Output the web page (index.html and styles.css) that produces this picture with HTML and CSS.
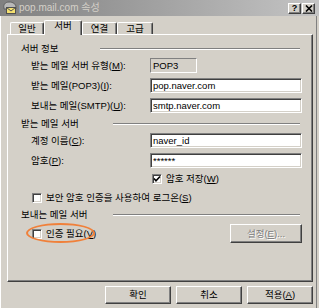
FILE: index.html
```html
<!DOCTYPE html>
<html lang="ko">
<head>
    <meta charset="UTF-8">
    <title>pop.mail.com 속성</title>
    <link rel="stylesheet" href="styles.css">
</head>
<body>
    <div class="titlebar">
        <svg class="title-icon" viewBox="0 0 14 14" width="14" height="14">
            <path d="M1 7 C0 4 2 1 6 1 C10 1 13 3 13 6 L13 8 L1 8 Z" fill="#b8b8b8" stroke="#606060" stroke-width="1"/>
            <rect x="3.5" y="6.5" width="9" height="6" fill="#f4e070" stroke="#505050" stroke-width="1"/>
            <path d="M3.5 6.5 L8 10 L12.5 6.5" fill="none" stroke="#505050" stroke-width="1"/>
        </svg>
        <span class="title-text">pop.mail.com 속성</span>
        <div class="title-buttons">
            <span class="title-btn">?</span>
            <span class="title-btn">
                <svg viewBox="0 0 8 7" width="8" height="7">
                    <path d="M1 0.5 L7 6.5 M7 0.5 L1 6.5" stroke="#000" stroke-width="1.6"/>
                </svg>
            </span>
        </div>
    </div>

    <div class="content">
        <div class="tabs">
            <div class="tab tab-general">일반</div>
            <div class="tab tab-server active">서버</div>
            <div class="tab tab-conn">연결</div>
            <div class="tab tab-adv">고급</div>
        </div>

        <div class="panel">
            <div class="heading">
                <span class="heading-text short">서버 정보</span>
                <span class="etched"></span>
            </div>
            <div class="row first">
                <label>받는 메일 서버 유형(<u>M</u>):</label>
                <div class="static">POP3</div>
            </div>
            <div class="row">
                <label>받는 메일(POP3)(<u>I</u>):</label>
                <input type="text" class="field" value="pop.naver.com">
            </div>
            <div class="row">
                <label>보내는 메일(SMTP)(<u>U</u>):</label>
                <input type="text" class="field" value="smtp.naver.com">
            </div>

            <div class="heading">
                <span class="heading-text">받는 메일 서버</span>
                <span class="etched"></span>
            </div>
            <div class="row first">
                <label>계정 이름(<u>C</u>):</label>
                <input type="text" class="field" value="naver_id">
            </div>
            <div class="row">
                <label>암호(<u>P</u>):</label>
                <input type="text" class="field" value="******">
            </div>
            <div class="row check-line">
                <span></span>
                <div class="check indent">
                    <span class="box">
                        <svg viewBox="0 0 8 8" width="8" height="8">
                            <path d="M1 3.5 L3 5.8 L7 1.5" fill="none" stroke="#000" stroke-width="1.6"/>
                        </svg>
                    </span>
                    <span>암호 저장(<u>W</u>)</span>
                </div>
            </div>
            <div class="check-row">
                <div class="check">
                    <span class="box"></span>
                    <span>보안 암호 인증을 사용하여 로그온(<u>S</u>)</span>
                </div>
            </div>

            <div class="heading">
                <span class="heading-text">보내는 메일 서버</span>
                <span class="etched"></span>
            </div>
            <div class="auth-row">
                <div class="check">
                    <span class="box"></span>
                    <span>인증 필요(<u>V</u>)</span>
                </div>
                <button class="btn settings" disabled>설정(<u>E</u>)...</button>
                <span class="highlight"></span>
            </div>
        </div>

        <div class="actions">
            <button class="btn">확인</button>
            <button class="btn">취소</button>
            <button class="btn">적용(<u>A</u>)</button>
        </div>
    </div>
</body>
</html>
```

FILE: styles.css
```css
* {
    box-sizing: border-box;
    margin: 0;
    padding: 0;
}

body {
    width: 319px;
    height: 308px;
    overflow: hidden;
    background-color: #d4d0c8;
    font-family: "Liberation Sans", "Noto Sans CJK KR", sans-serif;
    font-size: 9.5px;
    line-height: 12px;
    color: #000;
}

u {
    text-decoration: underline;
}

/* title bar */

.titlebar {
    display: flex;
    align-items: center;
    height: 16px;
    padding: 0 4px 0 3px;
    background: linear-gradient(to right, #808080, #c4c4c4);
}

.title-icon {
    margin-right: 2px;
}

.title-text {
    flex: 1;
    color: #d4d0c8;
    font-size: 10px;
}

.title-buttons {
    display: flex;
    gap: 1px;
}

.title-btn {
    display: flex;
    align-items: center;
    justify-content: center;
    width: 13px;
    height: 11px;
    background-color: #d4d0c8;
    border: 1px solid;
    border-color: #fff #404040 #404040 #fff;
    box-shadow: inset -1px -1px #808080;
    font-size: 9px;
    font-weight: bold;
    line-height: 9px;
}

/* dialog body */

.content {
    height: 292px;
    margin-right: 2px;
    padding: 0 3px 0 6px;
    border-left: 1px solid #fff;
    border-right: 1px solid #808080;
}

.tabs {
    display: flex;
    align-items: flex-end;
    height: 18px;
    margin-left: 3px;
}

.tab {
    height: 12px;
    text-align: center;
    line-height: 11px;
    border-top: 1px solid #fff;
    border-left: 1px solid #fff;
    border-right: 1px solid #404040;
    border-radius: 2px 2px 0 0;
    box-shadow: inset -1px 0 #808080;
    background-color: #d4d0c8;
}

.tab-general { width: 34px; }
.tab-server { width: 38px; }
.tab-conn { width: 35px; }
.tab-adv { width: 36px; }

.tab.active {
    position: relative;
    z-index: 1;
    height: 15px;
    margin-bottom: -1px;
    line-height: 10px;
}

.panel {
    height: 248px;
    padding: 8px 10px 0 13px;
    border: 1px solid;
    border-color: #fff #404040 #404040 #fff;
    box-shadow: inset -1px -1px #808080;
}

.heading {
    display: flex;
    align-items: center;
    height: 12px;
    margin-top: 5px;
}

.heading:first-child {
    margin-top: 0;
}

.heading-text {
    width: 92px;
}

.heading-text.short {
    width: 79px;
}

.etched {
    flex: 1;
    height: 2px;
    margin-right: 2px;
    border-top: 1px solid #808080;
    border-bottom: 1px solid #fff;
}

.row {
    display: grid;
    grid-template-columns: 119px 1fr;
    align-items: center;
    margin: 5px 0 0 10px;
}

.row.first {
    margin-top: 3px;
}

.static {
    width: 47px;
    height: 15px;
    padding-left: 2px;
    line-height: 13px;
    border: 1px solid;
    border-color: #808080 #fff #fff #808080;
}

.field {
    width: 100%;
    height: 15px;
    padding: 0 2px;
    font: inherit;
    line-height: 11px;
    color: #000;
    background-color: #fff;
    border: 1px solid;
    border-color: #808080 #fff #fff #808080;
    box-shadow: inset 1px 1px #404040, inset -1px -1px #d4d0c8;
    outline: none;
}

.check {
    display: flex;
    align-items: center;
    gap: 4px;
    height: 12px;
}

.check.indent {
    margin-left: 2px;
}

.box {
    display: flex;
    align-items: center;
    justify-content: center;
    width: 10px;
    height: 10px;
    background-color: #fff;
    border: 1px solid;
    border-color: #808080 #fff #fff #808080;
    box-shadow: inset 1px 1px #404040, inset -1px -1px #d4d0c8;
}

.check-row {
    margin: 7px 0 0 11px;
}

.auth-row {
    position: relative;
    display: flex;
    align-items: center;
    justify-content: space-between;
    margin: 3px 0 0 11px;
}

.highlight {
    position: absolute;
    left: -6px;
    top: -1px;
    width: 69px;
    height: 20px;
    border: 2px solid #f0803a;
    border-radius: 50%;
}

.btn {
    width: 66px;
    height: 18px;
    font: inherit;
    line-height: 12px;
    color: #000;
    background-color: #d4d0c8;
    border: 1px solid;
    border-color: #fff #404040 #404040 #fff;
    box-shadow: inset -1px -1px #808080;
}

.btn.settings {
    width: 72px;
    height: 19px;
    color: #808080;
    text-shadow: 1px 1px #fff;
}

.actions {
    display: flex;
    justify-content: flex-end;
    gap: 5px;
    margin-top: 4px;
}
```
